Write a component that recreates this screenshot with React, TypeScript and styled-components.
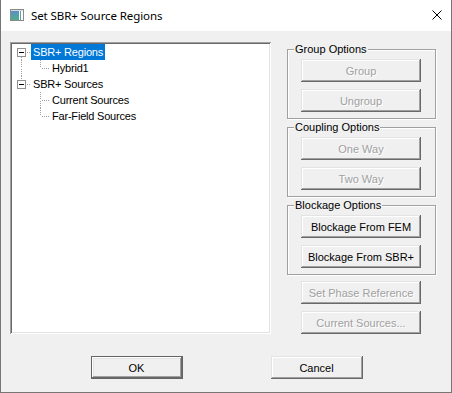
import React from "react";
import styled, { createGlobalStyle, css } from "styled-components";

const GlobalStyle = createGlobalStyle`
  html, body {
    margin: 0;
    padding: 0;
    background: #f0f0f0;
  }
  * {
    box-sizing: border-box;
  }
`;

const Window = styled.div`
  width: 452px;
  height: 393px;
  display: flex;
  flex-direction: column;
  background: #f0f0f0;
  border: 1px solid #767676;
  border-top: none;
  font-family: "Liberation Sans", Arial, sans-serif;
  font-size: 11px;
  color: #000;
`;

const TitleBar = styled.div`
  height: 31px;
  flex: none;
  display: flex;
  align-items: center;
  background: #fff;
  padding: 0 0 1px 9px;
`;

const TitleText = styled.span`
  margin-left: 7px;
  font-family: "Noto Sans", "Liberation Sans", sans-serif;
  font-size: 11.5px;
  letter-spacing: -0.1px;
  color: #000;
`;

const CloseButton = styled.div`
  margin-left: auto;
  width: 28px;
  height: 30px;
  display: flex;
  align-items: center;
  justify-content: center;
`;

const Body = styled.div`
  flex: 1;
  display: flex;
  flex-direction: column;
  padding: 11px 0 0 9px;
`;

const Main = styled.div`
  display: flex;
  gap: 16px;
`;

const TreeBox = styled.div`
  width: 261px;
  height: 292px;
  background: #fff;
  padding: 2px;
  box-shadow: inset 1px 1px #a0a0a0, inset -1px -1px #fff, inset 2px 2px #696969,
    inset -2px -2px #e3e3e3;
  font-family: "Liberation Sans", Arial, sans-serif;
  font-size: 11px;
  letter-spacing: -0.2px;
`;

const TreeRow = styled.div`
  display: flex;
  height: 16px;
  align-items: stretch;
`;

const Label = styled.span<{ $selected?: boolean }>`
  display: flex;
  align-items: center;
  height: 16px;
  padding: 0 2px 0 2px;
  white-space: nowrap;
  ${({ $selected }) =>
    $selected &&
    css`
      background: #0078d7;
      color: #fff;
    `}
`;

const Side = styled.div`
  width: 149px;
  display: flex;
  flex-direction: column;
  gap: 8px;
  padding-top: 7px;
`;

const GroupBox = styled.div`
  display: flex;
  flex-direction: column;
  gap: 7px;
  border: 1px solid #a0a0a0;
  box-shadow: inset 1px 1px #fff, 1px 1px #fff;
  padding: 0 14px 6px 13px;
`;

const Legend = styled.span`
  align-self: flex-start;
  height: 12px;
  line-height: 12px;
  margin: -7px 0 -3px -7px;
  padding: 0 1px;
  background: #f0f0f0;
  font-size: 11px;
`;

const Loose = styled.div`
  display: flex;
  flex-direction: column;
  gap: 7px;
  margin-top: -2px;
  padding-left: 14px;
`;

const Button = styled.div<{ $disabled?: boolean; $default?: boolean; $width?: number }>`
  width: ${({ $width }) => $width ?? 120}px;
  height: 23px;
  display: flex;
  align-items: center;
  justify-content: center;
  background: #f0f0f0;
  font-family: "Liberation Sans", Arial, sans-serif;
  font-size: 11px;
  color: ${({ $disabled }) => ($disabled ? "#a0a0a0" : "#000")};
  text-shadow: ${({ $disabled }) => ($disabled ? "1px 1px #fff" : "none")};
  box-shadow: ${({ $default }) =>
    $default
      ? "inset 0 0 0 1px #646464, inset -2px -2px #696969, inset 2px 2px #fff, inset -3px -3px #a0a0a0, inset 3px 3px #e3e3e3"
      : "inset -1px -1px #696969, inset 1px 1px #e3e3e3, inset -2px -2px #a0a0a0, inset 2px 2px #fff"};
  user-select: none;
`;

const Footer = styled.div`
  display: flex;
  justify-content: center;
  gap: 88px;
  margin-top: 22px;
  padding-right: 8px;
`;

const AppIcon = () => (
  <svg width="14" height="12" viewBox="0 0 14 12">
    <rect x="0.5" y="0.5" width="13" height="11" fill="#fff" stroke="#8a8a8a" />
    <defs>
      <linearGradient id="ig" x1="0" y1="0" x2="0" y2="1">
        <stop offset="0" stopColor="#5a8fc8" />
        <stop offset="1" stopColor="#4fae8a" />
      </linearGradient>
    </defs>
    <rect x="1" y="2" width="8" height="9" fill="url(#ig)" />
    <rect x="10" y="2" width="1" height="9" fill="#5aa6a0" />
    <rect x="1" y="1" width="12" height="1" fill="#d8d8d8" />
  </svg>
);

const CloseIcon = () => (
  <svg width="10" height="10" viewBox="0 0 10 10">
    <path d="M0.5 0.5 L9.5 9.5 M9.5 0.5 L0.5 9.5" stroke="#000" strokeWidth="1" />
  </svg>
);

type Conn = {
  up?: boolean;
  down?: boolean;
  right?: boolean;
  box?: boolean;
};

const Connector = ({ up, down, right, box }: Conn) => (
  <svg width="19" height="16" viewBox="0 0 19 16" shapeRendering="crispEdges">
    {up && (
      <line x1="9.5" y1="0" x2="9.5" y2={box ? 4 : 8} stroke="#a0a0a0" strokeDasharray="1 1" />
    )}
    {down && (
      <line x1="9.5" y1={box ? 13 : 9} x2="9.5" y2="16" stroke="#a0a0a0" strokeDasharray="1 1" />
    )}
    {right && (
      <line
        x1={box ? 15 : 11}
        y1="8.5"
        x2="19"
        y2="8.5"
        stroke="#a0a0a0"
        strokeDasharray="1 1"
      />
    )}
    {box && (
      <>
        <rect x="5.5" y="4.5" width="8" height="8" fill="#fff" stroke="#919191" />
        <line x1="7" y1="8.5" x2="12" y2="8.5" stroke="#000" />
      </>
    )}
  </svg>
);

type Node = { label: string; cells: Conn[]; selected?: boolean };

const tree: Node[] = [
  { label: "SBR+ Regions", cells: [{ box: true, right: true, down: true }], selected: true },
  { label: "Hybrid1", cells: [{ up: true, down: true }, { up: true, right: true }] },
  { label: "SBR+ Sources", cells: [{ box: true, right: true, up: true }] },
  { label: "Current Sources", cells: [{}, { up: true, down: true, right: true }] },
  { label: "Far-Field Sources", cells: [{}, { up: true, right: true }] },
];

const groups = [
  { title: "Group Options", buttons: ["Group", "Ungroup"], disabled: true },
  { title: "Coupling Options", buttons: ["One Way", "Two Way"], disabled: true },
  { title: "Blockage Options", buttons: ["Blockage From FEM", "Blockage From SBR+"], disabled: false },
];

export default function App() {
  return (
    <>
      <GlobalStyle />
      <Window>
        <TitleBar>
          <AppIcon />
          <TitleText>Set SBR+ Source Regions</TitleText>
          <CloseButton>
            <CloseIcon />
          </CloseButton>
        </TitleBar>
        <Body>
          <Main>
            <TreeBox>
              {tree.map((n) => (
                <TreeRow key={n.label}>
                  {n.cells.map((c, i) => (
                    <Connector key={i} {...c} />
                  ))}
                  <Label $selected={n.selected}>{n.label}</Label>
                </TreeRow>
              ))}
            </TreeBox>
            <Side>
              {groups.map((g) => (
                <GroupBox key={g.title}>
                  <Legend>{g.title}</Legend>
                  {g.buttons.map((b) => (
                    <Button key={b} $disabled={g.disabled}>
                      {b}
                    </Button>
                  ))}
                </GroupBox>
              ))}
              <Loose>
                <Button $disabled>Set Phase Reference</Button>
                <Button $disabled>Current Sources...</Button>
              </Loose>
            </Side>
          </Main>
          <Footer>
            <Button $default $width={92}>
              OK
            </Button>
            <Button $width={92}>Cancel</Button>
          </Footer>
        </Body>
      </Window>
    </>
  );
}
